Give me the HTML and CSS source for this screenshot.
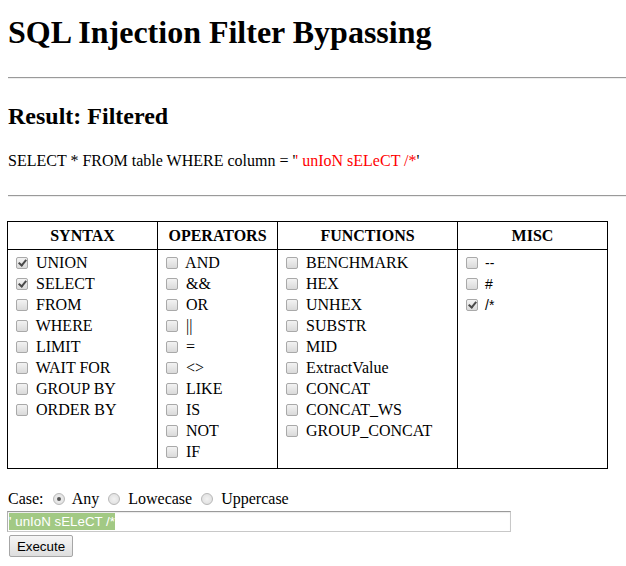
FILE: index.html
```html
<!DOCTYPE html>
<html>
<head>
<meta charset="utf-8">
<title>SQL Injection Filter Bypassing</title>
<link rel="stylesheet" href="styles.css">
</head>
<body>
<h1 class="title">SQL Injection Filter Bypassing</h1>
<hr class="rule">
<h2 class="result">Result: Filtered</h2>
<p class="query">SELECT * FROM table WHERE column = '<span class="inj">' unIoN sELeCT /*</span>'</p>
<hr class="rule rule-2">
<form class="filters">
<table class="grid">
<colgroup>
<col class="c1">
<col class="c2">
<col class="c3">
<col class="c4">
</colgroup>
<thead>
<tr>
<th>SYNTAX</th>
<th>OPERATORS</th>
<th>FUNCTIONS</th>
<th>MISC</th>
</tr>
</thead>
<tbody>
<tr>
<td>
<label class="opt"><input type="checkbox" class="cb" checked> UNION</label>
<label class="opt"><input type="checkbox" class="cb" checked> SELECT</label>
<label class="opt"><input type="checkbox" class="cb"> FROM</label>
<label class="opt"><input type="checkbox" class="cb"> WHERE</label>
<label class="opt"><input type="checkbox" class="cb"> LIMIT</label>
<label class="opt"><input type="checkbox" class="cb"> WAIT FOR</label>
<label class="opt"><input type="checkbox" class="cb"> GROUP BY</label>
<label class="opt"><input type="checkbox" class="cb"> ORDER BY</label>
</td>
<td>
<label class="opt"><input type="checkbox" class="cb"> AND</label>
<label class="opt"><input type="checkbox" class="cb"> &amp;&amp;</label>
<label class="opt"><input type="checkbox" class="cb"> OR</label>
<label class="opt"><input type="checkbox" class="cb"> ||</label>
<label class="opt"><input type="checkbox" class="cb"> =</label>
<label class="opt"><input type="checkbox" class="cb"> &lt;&gt;</label>
<label class="opt"><input type="checkbox" class="cb"> LIKE</label>
<label class="opt"><input type="checkbox" class="cb"> IS</label>
<label class="opt"><input type="checkbox" class="cb"> NOT</label>
<label class="opt"><input type="checkbox" class="cb"> IF</label>
</td>
<td>
<label class="opt"><input type="checkbox" class="cb"> BENCHMARK</label>
<label class="opt"><input type="checkbox" class="cb"> HEX</label>
<label class="opt"><input type="checkbox" class="cb"> UNHEX</label>
<label class="opt"><input type="checkbox" class="cb"> SUBSTR</label>
<label class="opt"><input type="checkbox" class="cb"> MID</label>
<label class="opt"><input type="checkbox" class="cb"> ExtractValue</label>
<label class="opt"><input type="checkbox" class="cb"> CONCAT</label>
<label class="opt"><input type="checkbox" class="cb"> CONCAT_WS</label>
<label class="opt"><input type="checkbox" class="cb"> GROUP_CONCAT</label>
</td>
<td>
<label class="opt"><input type="checkbox" class="cb"> <span class="sans">--</span></label>
<label class="opt"><input type="checkbox" class="cb"> <span class="sans">#</span></label>
<label class="opt"><input type="checkbox" class="cb" checked> <span class="sans">/*</span></label>
</td>
</tr>
</tbody>
</table>
<div class="case">Case: <label class="ropt"><input type="radio" name="case" class="rb" checked> Any</label> <label class="ropt"><input type="radio" name="case" class="rb"> Lowecase</label> <label class="ropt"><input type="radio" name="case" class="rb"> Uppercase</label></div>
<div class="textbox"><span class="sel">' unIoN sELeCT /*</span></div>
<button type="button" class="exec">Execute</button>
</form>
</body>
</html>
```
FILE: styles.css
```css
html, body {
  background: #fff;
}
body {
  margin: 0;
  padding: 14px 0 8px 8px;
  font-family: "Liberation Serif", "Times New Roman", serif;
  font-size: 16px;
  color: #000;
}
.title {
  font-size: 32px;
  font-weight: bold;
  line-height: 37px;
  margin: 0;
}
.rule {
  display: block;
  height: 0;
  margin: 26px 0 0 0;
  border: 0;
  border-top: 1px solid #9a9a9a;
  border-bottom: 1px solid #eeeeee;
}
.result {
  font-size: 24px;
  font-weight: bold;
  line-height: 28px;
  margin: 23px 0 0 0;
}
.query {
  line-height: 18px;
  margin: 22px 0 0 0;
}
.inj {
  color: #ff0000;
}
.rule-2 {
  margin-top: 25px;
}
.filters {
  margin: 0;
}
.grid {
  border-collapse: collapse;
  margin: 24px 0 0 -1px;
  width: 600px;
  table-layout: fixed;
}
.c1 { width: 150px; }
.c2 { width: 120px; }
.c3 { width: 180px; }
.c4 { width: 150px; }
.grid th, .grid td {
  border: 1px solid #000;
}
.grid th {
  font-weight: bold;
  line-height: 19px;
  padding: 4px 4px 4px 4px;
  height: 19px;
  text-align: center;
}
.grid td {
  vertical-align: top;
  padding: 2px 4px 6px 4px;
}
.opt {
  display: flex;
  align-items: center;
  height: 21px;
  white-space: pre;
}
.sans {
  font-family: "Liberation Sans", Arial, sans-serif;
  font-size: 14px;
  margin-left: 3px;
}
.cb {
  appearance: none;
  -webkit-appearance: none;
  width: 12px;
  height: 12px;
  margin: 0 4px 0 4px;
  border: 1px solid #a9a9a9;
  border-radius: 2px;
  background: linear-gradient(#f3f3f3, #dadada);
  position: relative;
  flex: none;
}
.cb:checked::after {
  content: "";
  position: absolute;
  left: 3px;
  top: 0px;
  width: 3px;
  height: 6px;
  border: solid #4a4a4a;
  border-width: 0 2px 2px 0;
  transform: rotate(40deg);
}
.case {
  margin-top: 20px;
  line-height: 19px;
}
.rb {
  appearance: none;
  -webkit-appearance: none;
  width: 12px;
  height: 12px;
  margin: 0 4px 0 5px;
  border: 1px solid #b8b8b8;
  border-radius: 50%;
  background: radial-gradient(#f2f2f2, #dcdcdc);
  position: relative;
  vertical-align: -1px;
}
.rb:checked::after {
  content: "";
  position: absolute;
  left: 3px;
  top: 3px;
  width: 4px;
  height: 4px;
  border-radius: 50%;
  background: #555;
}
.textbox {
  box-sizing: border-box;
  width: 504px;
  height: 21px;
  margin: 3px 0 0 -1px;
  border: 1px solid #c8c8c8;
  border-top-color: #9a9a9a;
  border-left-color: #b0b0b0;
  box-shadow: inset 0 1px 1px rgba(0,0,0,0.08);
  padding: 1px 1px;
  font-family: "Liberation Sans", Arial, sans-serif;
  font-size: 13.33px;
  line-height: 17px;
  white-space: pre;
}
.sel {
  background: #a2c984;
  color: #fff;
  display: inline-block;
  height: 17px;
}
.exec {
  display: block;
  margin: 3px 0 0 1px;
  width: 64px;
  height: 22px;
  padding: 0;
  font-family: "Liberation Sans", Arial, sans-serif;
  font-size: 13.33px;
  color: #000;
  border: 1px solid #a6a6a6;
  border-radius: 2px;
  background: linear-gradient(#f6f6f6, #dedede);
}
```
